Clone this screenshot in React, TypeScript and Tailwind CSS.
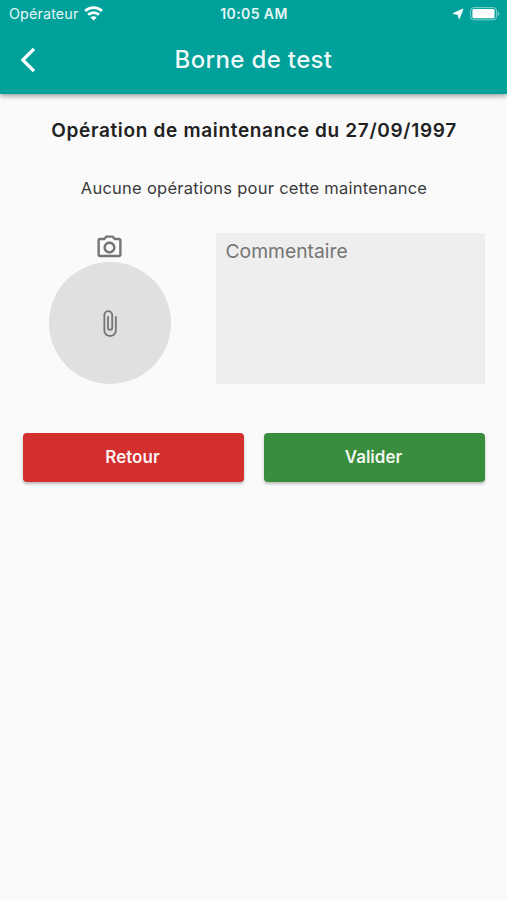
import type { ReactNode } from "react";
import { MdAttachFile, MdOutlineCameraAlt } from "react-icons/md";

export default function App() {
  return (
    <div className="flex h-[900px] w-[507px] flex-col overflow-hidden bg-[#fafafa] font-['Inter','Roboto',sans-serif] text-[#212121]">
      <header className="z-10 h-[94px] shrink-0 bg-[#00a19a] text-white shadow-[0_2px_5px_rgba(0,0,0,0.38)]">
        <StatusBar />
        <div className="grid h-[65px] grid-cols-[60px_1fr_60px] items-center">
          <button aria-label="Précédent" className="pl-[21px]">
            <BackIcon />
          </button>
          <h1 className="pt-px text-center text-[24px] leading-8 font-medium tracking-[0.35px] text-white/95">
            Borne de test
          </h1>
        </div>
      </header>

      <main className="flex flex-col pt-[23px] pr-[22px] pl-[23px]">
        <h2 className="text-center text-[19px] leading-7 font-semibold tracking-[0.67px]">
          Opération de maintenance du 27/09/1997
        </h2>
        <p className="mt-[31px] text-center text-[16.5px] leading-6 tracking-[0.26px] text-[#3a3a3a]">
          Aucune opérations pour cette maintenance
        </p>

        <div className="mt-[33px] flex justify-between">
          <div className="flex w-[173px] flex-col items-center text-[#757575]">
            <MdOutlineCameraAlt className="size-[29px]" />
            <div className="flex size-[122px] items-center justify-center rounded-full bg-[#e0e0e0]">
              <MdAttachFile className="size-[29px]" />
            </div>
          </div>
          <div className="h-[151px] w-[269px] bg-[#eeeeee] px-[9.5px] pt-1 text-[19.3px] leading-7 text-[#757575]">
            Commentaire
          </div>
        </div>

        <div className="mt-[49px] grid grid-cols-2 gap-[20px]">
          <ActionButton className="bg-[#d32f2f]">Retour</ActionButton>
          <ActionButton className="bg-[#388e3c]">Valider</ActionButton>
        </div>
      </main>
    </div>
  );
}

function StatusBar() {
  return (
    <div className="grid h-[27px] grid-cols-3 items-center pr-[7px] pl-[9px]">
      <div className="flex items-center gap-[5px] text-[14.3px] tracking-[0.15px] text-white/90">
        Opérateur
        <WifiIcon />
      </div>
      <div className="pr-px text-center text-[14px] font-semibold tracking-[0.4px] text-white/90">
        10:05 AM
      </div>
      <div className="flex items-center justify-end gap-[5px]">
        <svg viewBox="0 0 12 12" className="size-[12px]" fill="currentColor">
          <path
            d="M11 1 7.2 10.8 6.2 6.4 1 5.6z"
            stroke="currentColor"
            strokeWidth="0.9"
            strokeLinejoin="round"
          />
        </svg>
        <BatteryIcon />
      </div>
    </div>
  );
}

function BackIcon() {
  return (
    <svg viewBox="0 0 16 26" className="h-[26px] w-[16px]" fill="none">
      <path d="M13 1.8 1.8 13 13 24.2" stroke="currentColor" strokeWidth="3.3" />
    </svg>
  );
}

function WifiIcon() {
  return (
    <svg viewBox="0 0 20 16" className="h-4 w-5 text-white" fill="none" stroke="currentColor" strokeWidth="2.7">
      <path d="M1.2 5a12.4 12.4 0 0 1 16.8 0" />
      <path d="M4.2 8.8a7.7 7.7 0 0 1 10.8 0" />
      <path d="M9.6 14.6 6.5 11.5a4.4 4.4 0 0 1 6.2 0z" fill="currentColor" stroke="none" />
    </svg>
  );
}

function BatteryIcon() {
  return (
    <svg viewBox="0 0 31 14" className="h-[14px] w-[31px]" fill="none">
      <rect x="1.6" y="0.6" width="26" height="12.2" rx="3.2" stroke="white" strokeOpacity="0.5" />
      <rect x="3.4" y="2" width="22.2" height="9.2" rx="1.5" fill="white" />
      <path d="M28.8 4.6c2 .7 2 3.7 0 4.4z" fill="white" fillOpacity="0.5" />
    </svg>
  );
}

function ActionButton(props: { className: string; children: ReactNode }) {
  return (
    <button
      className={`h-[49px] rounded-[4px] pt-px pr-[2px] text-[17px] font-semibold text-white/95 shadow-[0_2px_3px_rgba(0,0,0,0.25)] ${props.className}`}
    >
      {props.children}
    </button>
  );
}
